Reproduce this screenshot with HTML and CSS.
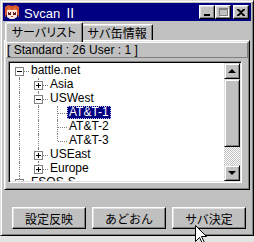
FILE: index.html
```html
<!DOCTYPE html>
<html lang="ja">
<head>
    <meta charset="UTF-8">
    <title>Svcan Ⅱ</title>
    <link rel="stylesheet" href="styles.css">
</head>
<body>
    <div class="window">
        <div class="titlebar">
            <svg class="app-icon" width="16" height="16" viewBox="0 0 16 16">
                <rect width="16" height="16" fill="#000080"/>
                <path d="M1 3 L4 1 L8 2 L12 1 L15 3 L15 14 L13 10 L13 6 L3 6 L3 10 L1 14 Z" fill="#d8582c"/>
                <path d="M3 6 L13 6 L13 13 L10 15 L6 15 L3 13 Z" fill="#f8e8e0"/>
                <path d="M4 3 L7 6 L5 6 Z M12 3 L9 6 L11 6 Z" fill="#f09050"/>
                <rect x="4" y="8" width="3" height="3" fill="#6a1818"/>
                <rect x="9" y="8" width="3" height="3" fill="#6a1818"/>
                <rect x="5" y="8" width="1" height="1" fill="#fff"/>
                <rect x="10" y="8" width="1" height="1" fill="#fff"/>
                <rect x="7" y="12" width="2" height="1" fill="#c04040"/>
            </svg>
            <span class="title">Svcan Ⅱ</span>
            <div class="title-buttons">
                <button class="tb-btn"><span class="glyph-min"></span></button>
                <button class="tb-btn"><span class="glyph-max"></span></button>
                <button class="tb-btn close">
                    <svg width="8" height="7" viewBox="0 0 8 7">
                        <path d="M0 0h2l2 2 2-2h2v1L5 3.5 8 6v1H6L4 5 2 7H0V6l3-2.5L0 1z" fill="#000"/>
                    </svg>
                </button>
            </div>
        </div>

        <div class="tabs">
            <div class="tab active">サーバリスト</div>
            <div class="tab">サバ缶情報</div>
        </div>

        <div class="panel">
            <div class="status">[ Standard : 26 User : 1 ]</div>
            <div class="tree-view">
                <div class="tree-rows">
                    <div class="row">
                        <span class="joint first"><i class="box"></i></span>
                        <span class="label">battle.net</span>
                    </div>
                    <div class="row">
                        <span class="guide line"></span>
                        <span class="joint mid"><i class="box plus"></i></span>
                        <span class="label">Asia</span>
                    </div>
                    <div class="row">
                        <span class="guide line"></span>
                        <span class="joint mid"><i class="box"></i></span>
                        <span class="label">USWest</span>
                    </div>
                    <div class="row">
                        <span class="guide line"></span>
                        <span class="guide line"></span>
                        <span class="joint mid"></span>
                        <span class="label selected">AT&amp;T-1</span>
                    </div>
                    <div class="row">
                        <span class="guide line"></span>
                        <span class="guide line"></span>
                        <span class="joint mid"></span>
                        <span class="label">AT&amp;T-2</span>
                    </div>
                    <div class="row">
                        <span class="guide line"></span>
                        <span class="guide line"></span>
                        <span class="joint"></span>
                        <span class="label">AT&amp;T-3</span>
                    </div>
                    <div class="row">
                        <span class="guide line"></span>
                        <span class="joint mid"><i class="box plus"></i></span>
                        <span class="label">USEast</span>
                    </div>
                    <div class="row">
                        <span class="guide line"></span>
                        <span class="joint"><i class="box plus"></i></span>
                        <span class="label">Europe</span>
                    </div>
                    <div class="row">
                        <span class="joint"><i class="box plus"></i></span>
                        <span class="label">FSOS-S</span>
                    </div>
                </div>
                <div class="scrollbar">
                    <div class="sb-btn"><span class="arrow-up"></span></div>
                    <div class="sb-thumb"></div>
                    <div class="sb-track"></div>
                    <div class="sb-btn"><span class="arrow-down"></span></div>
                </div>
            </div>
        </div>

        <div class="actions">
            <button class="btn">設定反映</button>
            <button class="btn">あどおん</button>
            <button class="btn">サバ決定</button>
        </div>
    </div>

    <svg class="cursor" width="12" height="20" viewBox="0 0 12 20">
        <path d="M0.5 0.5 L0.5 16.5 L4.5 12.5 L7.5 18.5 L9.5 17.5 L6.5 11.5 L11.5 11.5 Z" fill="#fff" stroke="#000" stroke-width="1"/>
    </svg>
</body>
</html>
```

FILE: styles.css
```css
body {
    margin: 0;
    background: #e4e4e4;
    font-family: "Liberation Sans", "Noto Sans CJK JP", sans-serif;
    font-size: 12px;
    color: #000;
}
.window {
    width: 254px;
    height: 236px;
    box-sizing: border-box;
    background: #c0c0c0;
    border: 1px solid;
    border-color: #dfdfdf #000 #000 #dfdfdf;
    box-shadow: inset 1px 1px #fff, inset -1px -1px #808080;
    padding: 2px;
    display: flex;
    flex-direction: column;
}
.titlebar {
    height: 18px;
    flex: none;
    background: #000080;
    color: #fff;
    display: flex;
    align-items: center;
    padding: 0 2px 0 1px;
}
.app-icon {
    display: block;
}
.title {
    margin-left: 4px;
    font-size: 13px;
    white-space: nowrap;
}
.title-buttons {
    margin-left: auto;
    display: flex;
}
.tb-btn {
    width: 16px;
    height: 14px;
    box-sizing: border-box;
    padding: 0;
    background: #c0c0c0;
    border: 1px solid;
    border-color: #fff #000 #000 #fff;
    box-shadow: inset -1px -1px #808080, inset 1px 1px #dfdfdf;
    display: flex;
    align-items: center;
    justify-content: center;
}
.tb-btn.close {
    margin-left: 2px;
}
.glyph-min {
    width: 6px;
    height: 2px;
    background: #000;
    margin-top: 6px;
    margin-right: 1px;
}
.glyph-max {
    width: 9px;
    height: 8px;
    box-sizing: border-box;
    border: 1px solid #808080;
    border-top-width: 2px;
    box-shadow: 1px 1px #fff;
}

.tabs {
    height: 19px;
    flex: none;
    display: flex;
    align-items: flex-end;
    padding-left: 2px;
}
.tab {
    height: 16px;
    box-sizing: border-box;
    width: 72px;
    line-height: 15px;
    text-align: center;
    font-family: "Noto Sans CJK JP", sans-serif;
    border: 1px solid;
    border-bottom: none;
    border-color: #fff #000 transparent #fff;
    border-radius: 2px 2px 0 0;
    box-shadow: inset -1px 0 #808080, inset 1px 1px #dfdfdf;
    background: #c0c0c0;
}
.tab.active {
    position: relative;
    z-index: 1;
    width: 78px;
    height: 20px;
    line-height: 17px;
    margin-bottom: -2px;
    margin-right: -2px;
    font-feature-settings: "palt";
}

.panel {
    height: 150px;
    flex: none;
    margin: 0 1px;
    box-sizing: border-box;
    border: 1px solid;
    border-color: #fff #000 #000 #fff;
    box-shadow: inset 1px 1px #dfdfdf, inset -1px -1px #808080;
    padding: 1px 1px 5px 1px;
    display: flex;
    flex-direction: column;
}
.status {
    height: 16px;
    box-sizing: border-box;
    border: 1px solid;
    border-color: #fff #808080 #808080 #fff;
    line-height: 14px;
    white-space: nowrap;
}
.tree-view {
    height: 122px;
    margin: 3px 6px 0 2px;
    box-sizing: border-box;
    border: 1px solid;
    border-color: #808080 #fff #fff #808080;
    box-shadow: inset 1px 1px #000, inset -1px -1px #dfdfdf;
    padding: 1px;
    background: #fff;
    display: flex;
}
.tree-rows {
    flex: 1;
    padding-top: 1px;
    overflow: hidden;
}
.row {
    display: flex;
    height: 14px;
}
.guide, .joint {
    position: relative;
    width: 19px;
    flex: none;
}
.guide.line::before {
    content: "";
    position: absolute;
    left: 9px;
    top: 0;
    bottom: 0;
    border-left: 1px dotted #808080;
}
.joint::before {
    content: "";
    position: absolute;
    left: 9px;
    top: 0;
    height: 7px;
    border-left: 1px dotted #808080;
}
.joint.mid::before {
    height: 14px;
}
.joint.first::before {
    top: 7px;
}
.joint::after {
    content: "";
    position: absolute;
    left: 10px;
    right: 0;
    top: 7px;
    border-top: 1px dotted #808080;
}
.box {
    position: absolute;
    left: 5px;
    top: 3px;
    z-index: 1;
    width: 9px;
    height: 9px;
    box-sizing: border-box;
    border: 1px solid #808080;
    background: #fff;
}
.box::before {
    content: "";
    position: absolute;
    left: 1px;
    top: 3px;
    width: 5px;
    height: 1px;
    background: #000;
}
.box.plus::after {
    content: "";
    position: absolute;
    left: 3px;
    top: 1px;
    width: 1px;
    height: 5px;
    background: #000;
}
.label {
    height: 13px;
    line-height: 13px;
    padding: 0 2px;
    white-space: nowrap;
}
.label.selected {
    background: #000080;
    color: #fff;
    outline: 1px dotted #c0c0ff;
    outline-offset: -1px;
}

.scrollbar {
    width: 16px;
    flex: none;
    display: flex;
    flex-direction: column;
}
.sb-btn, .sb-thumb {
    box-sizing: border-box;
    background: #c0c0c0;
    border: 1px solid;
    border-color: #dfdfdf #000 #000 #dfdfdf;
    box-shadow: inset 1px 1px #fff, inset -1px -1px #808080;
}
.sb-btn {
    height: 16px;
    display: flex;
    align-items: center;
    justify-content: center;
}
.sb-thumb {
    height: 68px;
}
.sb-track {
    flex: 1;
    background: repeating-conic-gradient(#c0c0c0 0 25%, #fff 0 50%) 0 0 / 2px 2px;
}
.arrow-up {
    border-left: 4px solid transparent;
    border-right: 4px solid transparent;
    border-bottom: 4px solid #000;
}
.arrow-down {
    border-left: 4px solid transparent;
    border-right: 4px solid transparent;
    border-top: 4px solid #000;
}

.actions {
    display: flex;
    gap: 6px;
    padding: 17px 0 0 9px;
}
.btn {
    width: 74px;
    height: 22px;
    padding: 0;
    font: 12px "Noto Sans CJK JP", sans-serif;
    color: #000;
    background: #c0c0c0;
    border: 1px solid;
    border-color: #fff #000 #000 #fff;
    box-shadow: inset -1px -1px #808080, inset 1px 1px #dfdfdf;
}

.cursor {
    position: absolute;
    left: 195px;
    top: 225px;
}
```
